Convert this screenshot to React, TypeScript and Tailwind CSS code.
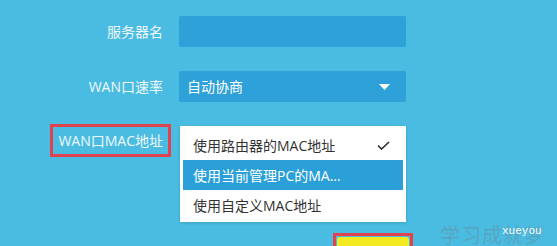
import React from "react";

export default function App() {
  const font = { fontFamily: '"Open Sans", "Noto Sans CJK SC", sans-serif' };
  return (
    <div
      className="relative w-[557px] h-[246px] overflow-hidden bg-[#4bbce1] flex flex-col"
      style={font}
    >
      {/* Row 1 */}
      <div className="flex mt-[16px] items-center">
        <div className="w-[171px] pr-[8px] text-right text-[14px] text-[#eef8fc] leading-[31px]">
          服务器名
        </div>
        <div className="ml-[8px] w-[227px] h-[31px] rounded-[2px] bg-[#2ea1d8]" />
      </div>

      {/* Row 2 */}
      <div className="flex mt-[24px] items-center">
        <div className="w-[171px] pr-[8px] text-right text-[14px] text-[#eef8fc] leading-[31px]">
          WAN口速率
        </div>
        <div className="ml-[8px] w-[227px] h-[31px] rounded-[2px] bg-[#2ea1d8] flex items-center justify-between pl-[8px] pr-[16px]">
          <span className="text-[14px] text-white leading-none">自动协商</span>
          <svg width="11" height="6" viewBox="0 0 11 6">
            <polygon points="0,0 11,0 5.5,6" fill="#ffffff" />
          </svg>
        </div>
      </div>

      {/* Row 3 */}
      <div className="flex mt-[22px] items-start">
        <div className="w-[171px] flex justify-end">
          <div className="border-[3px] border-[#e0434d] h-[33px] px-[5px] flex items-center text-[14px] text-[#eef8fc]">
            WAN口MAC地址
          </div>
        </div>
        <div className="ml-[9px] mt-[2px] w-[226px] bg-white pt-[4px] pb-[2px] px-[3px] shadow-[0_1px_3px_rgba(0,0,0,0.15)]">
          <div className="h-[30px] flex items-center justify-between pl-[10px] pr-[13px] text-[14px] text-[#333333]">
            <span>使用路由器的MAC地址</span>
            <svg width="13" height="9" viewBox="0 0 13 9">
              <polyline
                points="1,4.5 4.5,8 12,1"
                fill="none"
                stroke="#333333"
                strokeWidth="1.7"
              />
            </svg>
          </div>
          <div className="h-[30px] flex items-center pl-[10px] bg-[#2b9fd7] text-[14px] text-white">
            使用当前管理PC的MA...
          </div>
          <div className="h-[30px] flex items-center pl-[10px] text-[14px] text-[#333333]">
            使用自定义MAC地址
          </div>
        </div>
      </div>

      {/* Bottom button */}
      <div className="flex mt-[11px]">
        <div className="ml-[333px] w-[80px] h-[30px] border-[3px] border-[#e0434d] p-[1px]">
          <div className="w-full h-full rounded-[3px] bg-[#f3ea1f]" />
        </div>
      </div>

      {/* Watermark */}
      <div
        className="absolute left-[440px] top-[225px] text-[20px] leading-none tracking-[1px] text-[rgba(110,125,135,0.38)]"
        style={{ fontFamily: '"Noto Sans CJK SC", serif' }}
      >
        学习成就梦想
      </div>
      <div
        className="absolute left-[502px] top-[226px] text-[11px] leading-none text-white"
        style={{ fontFamily: '"Liberation Mono", monospace' }}
      >
        xueyou
      </div>
    </div>
  );
}
